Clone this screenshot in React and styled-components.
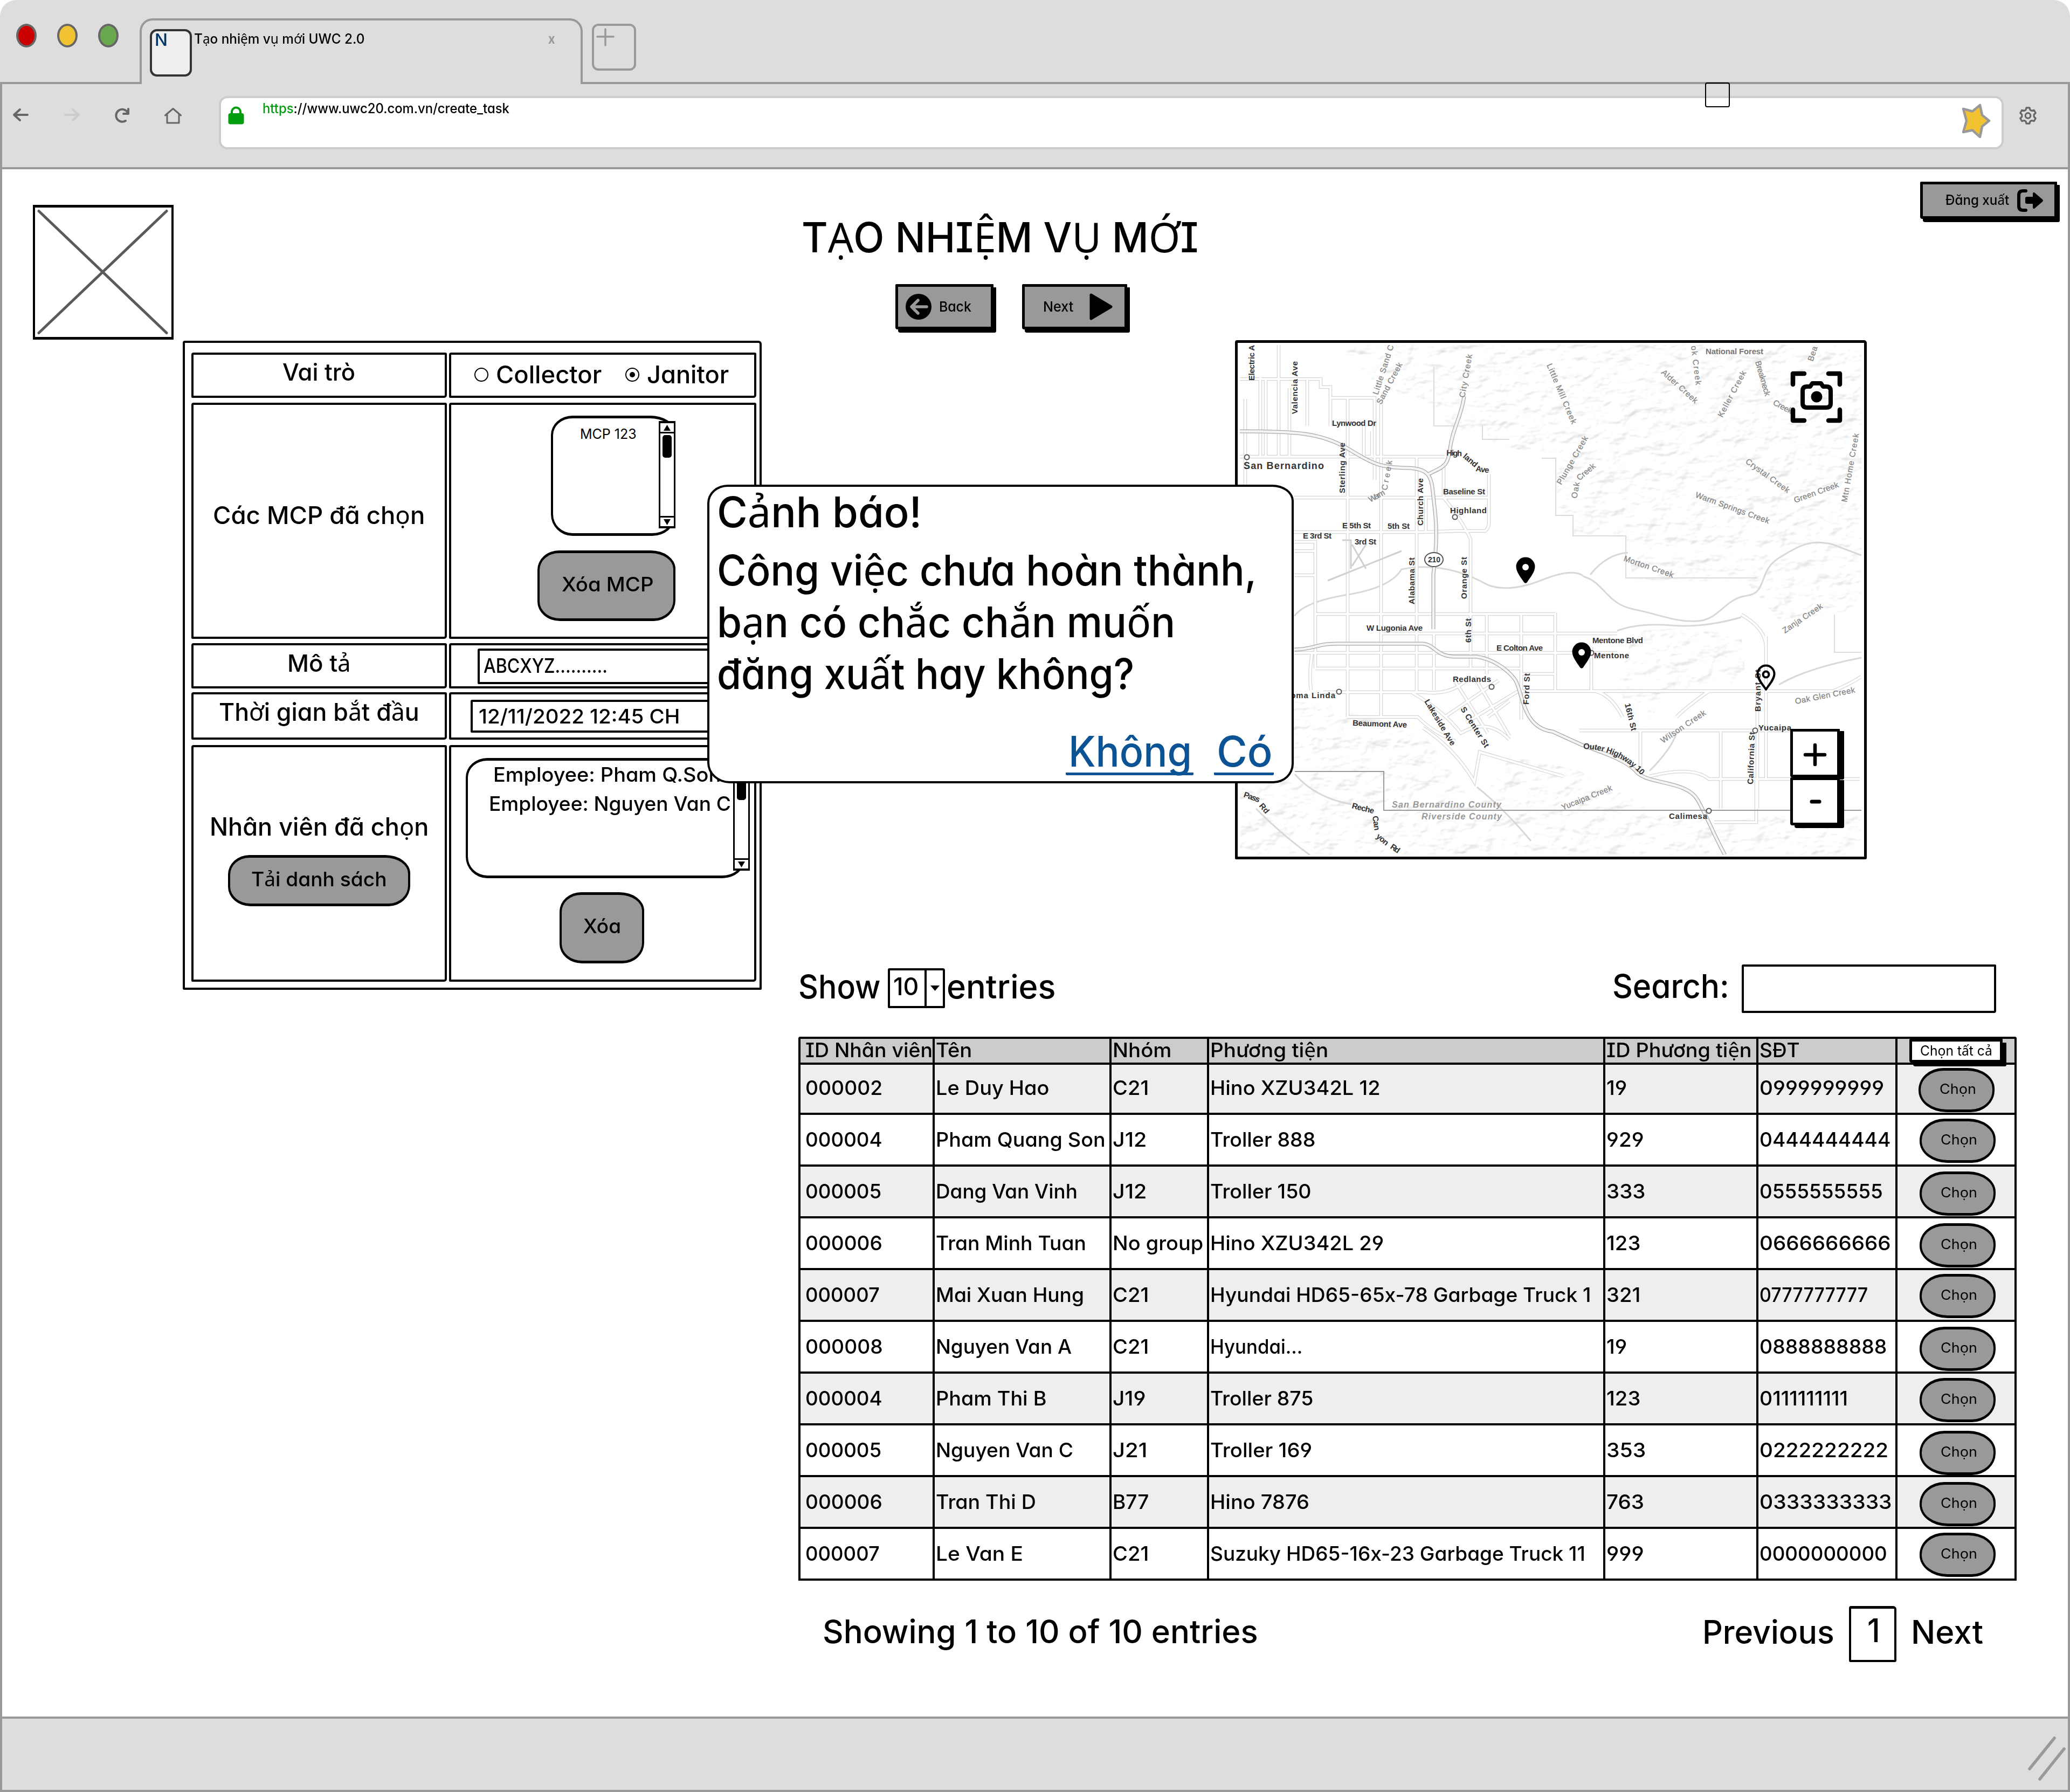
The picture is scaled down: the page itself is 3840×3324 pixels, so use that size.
import React, { useLayoutEffect, useRef, useState } from "react";
import styled, { createGlobalStyle, css } from "styled-components";

const GlobalStyle = createGlobalStyle`
  * { box-sizing: border-box; }
  body { margin: 0; background: #fff; }
`;

/* ---------- text ---------- */

const TextBox = styled.span`
  display: block;
  flex: none;
  width: ${(p) => p.$w}px;
  height: 1em;
  margin-bottom: ${(p) => p.$lift || 0}px;
  line-height: 1;
  font-size: ${(p) => p.$size}px;
  font-weight: ${(p) => p.$weight || 500};
  color: ${(p) => p.$color || "#000"};
  white-space: nowrap;
`;

const TextInner = styled.span`
  display: inline-block;
  margin-left: -0.04em;
  transform-origin: 0 50%;
  white-space: pre;
`;

const Accent = styled.span`
  font-family: "Noto Sans", sans-serif;
  font-weight: 400;
  line-height: 0;
`;

const Green = styled.span`
  color: #009e0f;
`;

// A line of text condensed or widened to a fixed measure.
function Text({ children, w, size, color, weight, lead, lift }) {
  const ref = useRef(null);
  const [scale, setScale] = useState(1);
  useLayoutEffect(() => {
    const natural = ref.current.offsetWidth;
    if (natural) setScale((w + size * 0.08) / natural);
  }, [children, w, size]);
  const parts = children.split(/([\u1EA0-\u1EF9]+)/);
  return (
    <TextBox $w={w} $size={size} $color={color} $weight={weight} $lift={lift}>
      <TextInner ref={ref} style={{ transform: `scaleX(${scale})` }}>
        {lead && <Green>{lead}</Green>}
        {parts.map((p, i) => (i % 2 ? <Accent key={i}>{p}</Accent> : p))}
      </TextInner>
    </TextBox>
  );
}

/* ---------- browser window ---------- */

const Window = styled.div`
  position: relative;
  width: 3840px;
  height: 3324px;
  display: flex;
  flex-direction: column;
  overflow: hidden;
  border-radius: 30px 30px 0 0;
  background: #fff;
  font-family: Inter, "Noto Sans", sans-serif;
  font-feature-settings: "cv11", "cv08", "cv04";
  color: #000;
`;

const TitleBar = styled.div`
  flex: none;
  height: 156px;
  border-bottom: 4px solid #999;
  background: #ddd;
  display: flex;
  align-items: flex-start;
  padding-left: 30px;
`;

const Lights = styled.div`
  display: flex;
  gap: 38px;
  padding-top: 44px;
  width: 229px;
`;

const Light = styled.span`
  width: 38px;
  height: 44px;
  border: 4px solid #666;
  border-radius: 50%;
  background: ${(p) => p.$c};
`;

const Tab = styled.div`
  width: 822px;
  height: 128px;
  margin-top: 34px;
  border: 4px solid #999;
  border-bottom: 0;
  border-radius: 24px 24px 0 0;
  background: #ddd;
  display: flex;
  align-items: flex-start;
  padding: 16px 48px 0 15px;
`;

const Favicon = styled.div`
  width: 78px;
  height: 88px;
  margin-right: 5px;
  border: 4px solid #333;
  border-radius: 13px;
  background: #eee;
  padding: 0 0 0 6px;
`;

const TabTitle = styled.div`
  padding-top: 6px;
  flex: 1;
  display: flex;
  justify-content: space-between;
`;

const NewTab = styled.div`
  width: 82px;
  height: 87px;
  margin: 44px 0 0 17px;
  border: 4px solid #999;
  border-radius: 12px;
  padding: 4px;
`;

const Toolbar = styled.div`
  flex: none;
  height: 158px;
  background: #ddd;
  border: 4px solid #999;
  border-top: 0;
  display: flex;
  align-items: flex-start;
  padding-left: 19px;
`;

const NavIcons = styled.div`
  width: 383px;
  display: flex;
  gap: 62px;
  padding-top: 44px;
`;

const UrlBar = styled.div`
  width: 3311px;
  height: 99px;
  margin-top: 22px;
  border: 4px solid #ccc;
  border-radius: 16px;
  background: #fff;
  display: flex;
  align-items: flex-start;
  padding: 10px 20px 0 13px;
`;

const UrlText = styled.div`
  flex: 1;
  margin-top: -3px;
  padding: 0 0 0 35px;
`;

const SettingsSlot = styled.div`
  padding: 42px 0 0 29px;
`;

const HoverBox = styled.div`
  position: absolute;
  left: 3163px;
  top: 153px;
  width: 46px;
  height: 46px;
  border: 2px solid #000;
  border-radius: 4px;
`;

const Page = styled.main`
  flex: 1;
  border-left: 4px solid #999;
  border-right: 4px solid #999;
  display: flex;
`;

const StatusBar = styled.div`
  flex: none;
  height: 140px;
  background: #ddd;
  border: 4px solid #999;
  display: flex;
  justify-content: flex-end;
  padding: 32px 4px 0 0;
`;

/* ---------- buttons ---------- */

const BlockButton = styled.button`
  width: ${(p) => p.$w}px;
  height: ${(p) => p.$h}px;
  margin: 0;
  padding: ${(p) => p.$pt || 0}px ${(p) => p.$pr || 0}px 0 ${(p) => p.$pl || 0}px;
  border: 5px solid #000;
  border-radius: 2px 1px 3px 4px;
  background: ${(p) => p.$bg || "#999"};
  box-shadow: ${(p) => p.$shadow || "5px 6px 0 #000"};
  font: inherit;
  font-feature-settings: inherit;
  display: flex;
  align-items: center;
  justify-content: space-between;
`;

const PillButton = styled.button`
  width: ${(p) => p.$w}px;
  height: ${(p) => p.$h}px;
  margin: ${(p) => p.$m || 0};
  padding: 0 0 ${(p) => (p.$round ? 3 : 7)}px;
  border: 4px solid #000;
  border-top-width: 5px;
  border-bottom-width: 5px;
  border-radius: ${(p) =>
    p.$round
      ? "46px 50px 44px 52px / 40px 38px 40px 40px"
      : "40px 46px 40px 42px / 36px 34px 38px 36px"};
  background: #999;
  font: inherit;
  font-feature-settings: inherit;
  display: flex;
  align-items: center;
  justify-content: center;
`;

/* ---------- left column ---------- */

const LeftColumn = styled.section`
  width: 1477px;
  padding-top: 66px;
`;

const Placeholder = styled.div`
  width: 261px;
  height: 250px;
  margin-left: 57px;
  border: 5px solid #000;
  border-width: 5px 4px;
`;

const Panel = styled.div`
  width: 1074px;
  height: 1204px;
  margin: 2px 0 0 335px;
  border: 4px solid #000;
  border-radius: 4px 6px 2px 3px;
  padding: 18px 6px 0 12px;
  display: grid;
  grid-template-columns: 474px 570px;
  grid-template-rows: 84px 438px 84px 88px 439px;
  column-gap: 4px;
  row-gap: 8px;
`;

const Cell = styled.div`
  border: 4px solid #000;
  border-radius: 4px 3px 5px 2px;
  margin-top: ${(p) => p.$mt || 0}px;
  margin-bottom: ${(p) => (p.$mt ? -p.$mt : 0)}px;
  padding-top: ${(p) => p.$pt || 0}px;
  padding-bottom: ${(p) => p.$pb || 0}px;
  display: flex;
  flex-direction: ${(p) => (p.$row ? "row" : "column")};
  align-items: ${(p) => p.$align || "center"};
`;

const RadioLabel = styled.label`
  display: flex;
  align-items: center;
  gap: 16px;
  margin-left: ${(p) => p.$ml}px;
`;

const Radio = styled.span`
  width: 26px;
  height: 26px;
  border: 2px solid #000;
  border-radius: 50%;
  display: grid;
  place-items: center;
  &::after {
    content: "";
    width: 10px;
    height: 10px;
    border-radius: 50%;
    background: ${(p) => (p.$on ? "#000" : "transparent")};
  }
`;

const ListBox = styled.div`
  position: relative;
  width: ${(p) => p.$w}px;
  height: 223px;
  margin: ${(p) => p.$m};
  border: 5px solid #000;
  border-width: 5px 4px;
  border-radius: 40px 46px 42px 40px / 36px 30px 36px 40px;
  padding: ${(p) => p.$p};
  display: flex;
  flex-direction: column;
  gap: 17px;
`;

const Track = styled.div`
  position: absolute;
  right: ${(p) => p.$r}px;
  top: 5px;
  width: 31px;
  height: 199px;
  border: 4px solid #000;
  border-width: 4px 3px;
  background: #fff;
  display: flex;
  flex-direction: column;
  align-items: center;
`;

const Stepper = styled.div`
  width: 25px;
  height: 19px;
  display: grid;
  place-items: center;
  border-${(p) => p.$edge}: 3px solid #000;
`;

const Thumb = styled.div`
  flex: 1;
  padding-top: 3px;
  &::before {
    content: "";
    display: block;
    width: 17px;
    height: 42px;
    border-radius: 5px;
    background: #000;
  }
`;

const Field = styled.div`
  width: ${(p) => p.$w}px;
  height: ${(p) => p.$h}px;
  margin: ${(p) => p.$m || 0};
  border: 4px solid #000;
  border-radius: 3px 2px 4px 2px;
  padding: 0 0 ${(p) => p.$pb || 0}px ${(p) => p.$pl || 0}px;
  background: #fff;
  display: flex;
  align-items: center;
`;

/* ---------- right column ---------- */

const RightColumn = styled.section`
  flex: 1;
  display: flex;
  flex-direction: column;
`;

const HeaderRow = styled.header`
  height: 317px;
  display: flex;
  justify-content: space-between;
  align-items: flex-start;
  padding: 23px 20px 0 9px;
`;

const Heading = styled.h1`
  margin: 65px 0 0;
  font: inherit;
`;

const Actions = styled.div`
  display: flex;
  gap: 53px;
  margin: 48px 0 0 171px;
`;

const MapFrame = styled.div`
  position: relative;
  width: 1172px;
  height: 963px;
  margin-left: 810px;
  border: 5px solid #000;
  border-radius: 4px 5px 3px 2px;
`;

const MapDrawing = styled.svg`
  display: block;
  width: 1162px;
  height: 953px;
  font-family: "Liberation Sans", Arial, sans-serif;
`;

const Zoomer = styled.div`
  position: absolute;
  left: 1025px;
  top: 716px;
  display: flex;
  flex-direction: column;
`;

const ListControls = styled.div`
  height: 90px;
  margin: 195px 133px 44px 2px;
  display: flex;
  align-items: center;
`;

const Select = styled.div`
  width: 106px;
  height: 74px;
  margin: 0 5px 2px 16px;
  border: 4px solid #000;
  border-radius: 3px 4px 2px 2px;
  display: flex;
`;

const SelectValue = styled.div`
  width: 68px;
  padding: 0 0 8px 8px;
  border-right: 4px solid #000;
  display: flex;
  align-items: center;
`;

const Caret = styled.div`
  flex: 1;
  display: grid;
  place-items: center;
`;

const Spacer = styled.div`
  flex: 1;
`;

const Table = styled.div`
  width: 2260px;
  border: 4px solid #000;
  border-bottom: 0;
  border-radius: 4px 4px 0 0;
`;

const Row = styled.div`
  display: grid;
  grid-template-columns: 249px 328px 181px 735px 284px 258px 217px;
  height: ${(p) => (p.$head ? 45 : 96)}px;
  background: ${(p) => (p.$head ? "#ccc" : p.$odd ? "#eee" : "#fff")};
`;

const Td = styled.div`
  border-right: 4px solid #000;
  border-bottom: 4px solid #000;
  padding: 0 0 ${(p) => (p.$head ? 4 : 1)}px ${(p) => (p.$first ? 10 : 3)}px;
  display: flex;
  align-items: center;
  min-width: 0;
  &:last-child {
    border-right: 0;
    padding: ${(p) => (p.$head ? "0" : "0 0 0 39px")};
    align-items: ${(p) => (p.$head ? "flex-start" : "center")};
    ${(p) => p.$head && css`padding-left: 22px;`}
  }
`;

const Pager = styled.div`
  height: 104px;
  margin: 47px 160px 0 47px;
  display: flex;
  align-items: center;
`;

const PageNumber = styled.div`
  width: 88px;
  height: 104px;
  margin: 0 29px 0 30px;
  border: 4px solid #000;
  border-top-width: 5px;
  border-radius: 4px 6px 3px 3px;
  padding: 0 0 15px 32px;
  display: flex;
  align-items: center;
`;

/* ---------- dialog ---------- */

const Dialog = styled.div`
  position: absolute;
  left: 1312px;
  top: 899px;
  width: 1088px;
  height: 554px;
  border: 4px solid #000;
  border-radius: 38px 40px 38px 42px / 34px 30px 36px 38px;
  background: #fff;
  padding: 8px 33px 0 17px;
`;

const Message = styled.div`
  margin-top: 30px;
  display: flex;
  flex-direction: column;
  gap: 18px;
`;

const Links = styled.div`
  display: flex;
  justify-content: flex-end;
  gap: 38px;
  margin-top: 66px;
`;

const Link = styled.a`
  border-bottom: 5px solid #0b5394;
  border-radius: 2px;
  padding: 0 6px 0 8px;
`;

/* ---------- icons ---------- */

const Svg = styled.svg`
  display: block;
  flex: none;
  overflow: visible;
  margin: ${(p) => p.$m || 0};
`;

const Arrow = ({ flip, color }) => (
  <Svg width="32" height="26" viewBox="0 0 32 26" fill="none" stroke={color} strokeWidth="4" strokeLinecap="round" strokeLinejoin="round">
    <path d={flip ? "M4 13H29M18 3L29 13L18 23" : "M28 13H3M14 3L3 13L14 23"} />
  </Svg>
);

const Reload = () => (
  <Svg width="32" height="30" viewBox="0 0 32 30" fill="none" stroke="#666" strokeWidth="4" strokeLinecap="round" strokeLinejoin="round">
    <path d="M22 24A11.5 11.5 0 1 1 26 9" />
    <path d="M27 2V11H18" />
  </Svg>
);

const Home = () => (
  <Svg width="32" height="30" viewBox="0 0 32 30" fill="none" stroke="#666" strokeWidth="3" strokeLinecap="round" strokeLinejoin="round">
    <path d="M1.5 14L16 1.5L30.5 14M5 12V28H27V12" />
  </Svg>
);

const Lock = () => (
  <Svg $m="6px 0 0" width="30" height="33" viewBox="0 0 30 33">
    <path d="M7 14V9.500A8 8 0 0 1 23 9.500V14" fill="none" stroke="#009e0f" strokeWidth="4" />
    <rect x="0.500" y="12" width="29" height="20.500" rx="4" fill="#009e0f" />
  </Svg>
);

const Star = () => (
  <Svg width="54" height="66" viewBox="3639 192 54 66">
    <path
      d="M3690 224L3677 234.500L3673 254L3659 241.500L3642 245L3648 224L3642 202L3659 206.500L3673 195L3677 213.500Z"
      fill="#f1c232"
      stroke="#999"
      strokeWidth="4.500"
      strokeLinejoin="round"
    />
  </Svg>
);

const Gear = () => (
  <Svg width="32" height="33" viewBox="0 0 32 33" fill="none" stroke="#666" strokeWidth="3.200" strokeLinejoin="round">
    <path d="M13 1.800h6l1 4 3 1.700 4.200-1.200 3 5.200-3 3v4l3 3-3 5.200-4.200-1.200-3 1.700-1 4h-6l-1-4-3-1.700-4.200 1.200-3-5.200 3-3v-4l-3-3 3-5.200L9 7.500l3-1.700z" />
    <circle cx="16" cy="16.500" r="4.800" />
  </Svg>
);

const LogoutIcon = () => (
  <Svg width="49" height="42" viewBox="0 0 49 42">
    <path d="M16 3H11Q3 3 3 11V31Q3 39 11 39H16" fill="none" stroke="#000" strokeWidth="6" strokeLinecap="round" />
    <path d="M18 14H29V8Q30 4 33 7L47 19Q49 21 47 23L33 35Q30 38 29 34V27H18Q15 27 15 24V17Q15 14 18 14Z" />
  </Svg>
);

const BackIcon = () => (
  <Svg width="48" height="48" viewBox="0 0 48 48">
    <circle cx="24" cy="24" r="24" />
    <path d="M39 24H12M23 12L11 24L23 36" fill="none" stroke="#999" strokeWidth="5.500" strokeLinecap="round" strokeLinejoin="round" />
  </Svg>
);

const PlayIcon = () => (
  <Svg width="43" height="50" viewBox="0 0 43 50">
    <path d="M3 3L40 25L3 47Z" stroke="#000" strokeWidth="5" strokeLinejoin="round" />
  </Svg>
);

const Triangle = ({ up, w = 13, h = 11 }) => (
  <Svg width={w} height={h} viewBox="0 0 10 10" preserveAspectRatio="none">
    <path d={up ? "M0 10L5 0L10 10Z" : "M0 0H10L5 10Z"} />
  </Svg>
);

function Scrollbar({ r }) {
  return (
    <Track $r={r}>
      <Stepper $edge="bottom"><Triangle up /></Stepper>
      <Thumb />
      <Stepper $edge="top"><Triangle /></Stepper>
    </Track>
  );
}

/* ---------- map ---------- */

// text, x, y, length, rotation
const STREETS = [
  ["Electric A", 2327, 706, 66, -90], ["Valencia Ave", 2407, 768, 98, -90], ["Lynwood Dr", 2471, 790, 82, 0],
  ["Sterling Ave", 2495, 915, 94, -90], ["High", 2683, 845, 29, 2], ["land", 2713, 848, 30, 40], ["Ave", 2737, 874, 25, 8],
  ["Baseline St", 2677, 917, 78, 0], ["Highland", 2690, 952, 68, 0], ["E 5th St", 2490, 980, 53, 0],
  ["5th St", 2574, 981, 41, 0], ["E 3rd St", 2417, 999, 53, 0], ["3rd St", 2513, 1010, 40, 0],
  ["Church Ave", 2640, 975, 88, -90], ["Alabama St", 2624, 1121, 87, -90], ["Orange St", 2721, 1111, 78, -90],
  ["6th St", 2729, 1192, 45, -90], ["W Lugonia Ave", 2535, 1170, 104, 0], ["E Colton Ave", 2776, 1207, 86, 0],
  ["Redlands", 2695, 1265, 71, 0], ["Loma Linda", 2384, 1295, 93, 0], ["Beaumont Ave", 2509, 1346, 101, 2],
  ["Lakeside Ave", 2642, 1301, 97, 59], ["S Center St", 2709, 1315, 86, 58], ["Ford St", 2836, 1307, 58, -88],
  ["Pass", 2306, 1478, 31, 20], ["Rd", 2335, 1495, 20, 50], ["Reche", 2507, 1499, 42, 14], ["Can", 2546, 1514, 27, 82],
  ["yon", 2552, 1553, 25, 40], ["Rd", 2578, 1573, 18, 35], ["Mentone Blvd", 2954, 1193, 94, 0],
  ["Mentone", 2957, 1221, 65, 0], ["Bryant St", 3266, 1320, 78, -90], ["Yucaipa", 3262, 1355, 61, 0],
  ["California St", 3252, 1455, 97, -88], ["16th St", 3014, 1306, 52, 76], ["Calimesa", 3096, 1519, 71, 0],
];

const CREEKS = [
  ["Little Sand C", 2556, 733, 96, -72], ["Sand Creek", 2562, 751, 85, -62], ["City Creek", 2717, 738, 81, -80],
  ["Warm", 2542, 932, 32, -28], ["Creek", 2573, 910, 56, -80], ["Little Mill Creek", 2869, 677, 120, 67],
  ["Plunge Creek", 2896, 900, 101, -60], ["Oak", 2925, 925, 30, -80], ["Creek", 2930, 892, 40, -40],
  ["Alder Creek", 3081, 692, 85, 42], ["ok Creek", 3137, 642, 73, 83], ["Keller Creek", 3195, 775, 95, -62],
  ["Breakneck", 3256, 671, 67, 74], ["Creek", 3288, 750, 38, 28], ["Bea", 3363, 671, 28, -72],
  ["Crystal Creek", 3237, 858, 97, 36], ["Green Creek", 3330, 933, 87, -20], ["Mtn Home Creek", 3426, 932, 129, -80],
  ["Warm Springs Creek", 3144, 922, 145, 20], ["Morton Creek", 3011, 1040, 97, 19], ["Zanja Creek", 3311, 1175, 86, -34],
  ["Wilson Creek", 3085, 1379, 97, -34], ["Oak Glen Creek", 3331, 1306, 113, -11], ["Yucaipa Creek", 2899, 1503, 100, -22],
];

const HIGHWAYS =
  "M2300 800C2400 800 2450 802 2500 832S2560 867 2610 868S2655 890 2661 939S2664 1020 2659 1066V1167" +
  "M2649 880C2675 866 2686 868 2690 832S2712 770 2716 735" +
  "M2401 1205C2440 1204 2440 1194 2480 1194H2640C2662 1196 2664 1218 2700 1218H2739C2768 1222 2795 1240 2810 1260S2822 1350 2880 1357" +
  "L2935 1382C2985 1400 3020 1412 3038 1434C3064 1456 3130 1448 3150 1485S3180 1550 3200 1586";

const MINOR_ROADS =
  "M2300 703H2450V718H2468V790M2310 740V900M2338 700V845M2348 703V845M2372 640V845M2392 720V845M2425 703V790M2468 738H2550V890" +
  "M2300 847H2680M2400 923H2760M2400 987H2640L2700 985H2755Q2762 980 2762 970V880M2401 1005H2440V1240M2401 1022H2438M2401 1067H2440" +
  "M2500 740V1330M2562 740V1330M2530 790V845M2545 800V845M2628 845V1285M2645 923V985M2678 860V923Q2712 965 2728 1000V1240" +
  "M2442 1139H2885M2560 1175H3000M2401 1211H3000M2440 1240H2820M2434 1213Q2428 1250 2432 1280M2455 1284H2640Q2690 1290 2720 1262" +
  "M2758 1137V1250M2822 1137V1335M2885 1137V1280M2952 1200V1282M2820 1250H2885M2820 1282H2960Q2990 1290 3010 1330" +
  "M2660 1175V1280M2700 1265L2760 1360M2735 1255L2800 1365M2680 1330L2780 1262M2720 1340L2820 1280M2760 1330L2800 1300" +
  "M2620 1285Q2680 1320 2710 1360Q2760 1330 2800 1372M2500 1330H2630Q2660 1360 2700 1375M2640 1350Q2700 1390 2735 1450L2745 1395L2900 1440" +
  "M2930 1355H3330M3043 1355V1430M3192 1355V1500M3260 1270V1500M3276 1180V1445M3060 1440Q3140 1420 3170 1445H3450M3180 1525H3258V1445" +
  "M2940 1282H3270M3170 1282Q3130 1310 3110 1330M3276 1282H3400Q3430 1270 3453 1255M3230 1140Q3275 1165 3276 1200";

const BOUNDARIES =
  "M2860 850H2886V956H2918V994H3016V1072H3260M3403 1140V1210H3453M2660 680V790H2700M2750 790V815H2800";

const RIVERS =
  "M2401 1143Q2420 1116 2500 1103T2600 1056Q2680 1040 2760 1085Q2800 1100 2860 1076T2939 1070C2975 1080 2980 1120 3030 1130S3110 1155 3150 1152" +
  "S3200 1110 3240 1105S3260 1060 3300 1035S3360 1000 3400 1010T3453 1030M2950 1066Q2980 1028 3020 1025M3000 1170Q3040 1155 3100 1160T3230 1145" +
  "M2402 1436Q2440 1480 2507 1492M2330 1500Q2380 1550 2430 1586M3453 1220Q3350 1240 3300 1270M3060 1430Q3100 1390 3110 1360M2740 1460Q2790 1500 2840 1560";

const RIDGES = [
  "M2480 639H3453V1130L3300 1150L3240 1080L3030 1075L3016 994H2918V956H2886V850L2800 830L2700 800L2640 740L2560 720Z",
  "M3030 1170L3130 1165L3230 1180L3240 1265L3100 1280L3050 1350L3000 1280Z",
  "M2300 1290L2480 1310L2640 1360L2740 1500L2800 1400L2930 1430L3100 1520L3453 1510V1586H2300Z",
];

const Label = ({ item, size = 15, ...rest }) => {
  const [t, x, y, len, rot] = item;
  return (
    <text x={x} y={y} fontSize={size} textLength={len} transform={`rotate(${rot} ${x} ${y})`} {...rest}>
      {t}
    </text>
  );
};

const Pin = ({ x, y, hollow }) => (
  <g transform={`translate(${x} ${y})`}>
    <path
      d={hollow
        ? "M0 46C-5 38 -15.500 27 -15.500 17A15.500 15.500 0 0 1 15.500 17C15.500 27 5 38 0 46Z"
        : "M-3 46C-8 38 -17.500 27 -17.500 17A17.500 17.500 0 0 1 17.500 17C17.500 27 8 38 3 46Q0 49.500 -3 46Z"}
      fill={hollow ? "none" : "#000"}
      stroke="#000"
      strokeWidth={hollow ? 4 : 0}
      strokeLinejoin="round"
    />
    <circle cx="0" cy="18" r={hollow ? 5.500 : 6} fill={hollow ? "none" : "#fff"} stroke="#000" strokeWidth={hollow ? 4 : 0} />
  </g>
);

function MapView() {
  return (
    <MapFrame>
      <MapDrawing viewBox="2296 636 1162 953">
        <defs>
          <filter id="relief" x="0" y="0" width="100%" height="100%" colorInterpolationFilters="sRGB">
            <feTurbulence type="fractalNoise" baseFrequency="0.026 0.042" numOctaves="3" seed="8" />
            <feDiffuseLighting surfaceScale="6" diffuseConstant="1.22" lightingColor="#fff">
              <feDistantLight azimuth="225" elevation="58" />
            </feDiffuseLighting>
            <feColorMatrix values="0.24 0 0 0 0.765  0.24 0 0 0 0.765  0.24 0 0 0 0.765  0 0 0 1 0" />
            <feComposite in2="SourceGraphic" operator="in" />
          </filter>
          <clipPath id="sheet"><rect x="2300" y="639" width="1153" height="947" /></clipPath>
          <path id="outer" d="M2937 1389Q3004 1390 3050 1444" />
        </defs>
        <g clipPath="url(#sheet)">
          <g filter="url(#relief)">
            {RIDGES.map((d) => <path key={d} d={d} />)}
          </g>
          <path d={BOUNDARIES} fill="none" stroke="#dcdcdc" strokeWidth="2" />
          <path d={RIVERS} fill="none" stroke="#d8d8d8" strokeWidth="3" />
          <path d={MINOR_ROADS} fill="none" stroke="#d6d6d6" strokeWidth="6.500" />
          <path d={MINOR_ROADS} fill="none" stroke="#fff" strokeWidth="4" />
          <path d="M2463 1077L2600 1022M2490 1002H2506V1055M2508 1010L2534 1055M2534 1010L2508 1050" fill="none" stroke="#d0d0d0" strokeWidth="3" />
          <path d={HIGHWAYS} fill="none" stroke="#a8a8a8" strokeWidth="7" />
          <path d={HIGHWAYS} fill="none" stroke="#f4f4f4" strokeWidth="4.500" />
          <path d="M2402 1431H2567V1503H3453" fill="none" stroke="#999" strokeWidth="2" />
          <g fill="#333" fontWeight="700">
            {STREETS.map((s) => <Label key={s.join()} item={s} />)}
            <Label item={["San Bernardino", 2307, 870, 149, 0]} size={18} />
            <text fontSize="15"><textPath href="#outer" textLength="122">Outer Highway 10</textPath></text>
          </g>
          <g fill="#858585" stroke="#858585" strokeWidth="0.300">
            {CREEKS.map((s) => <Label key={s.join()} item={s} />)}
          </g>
          <g fill="#999" fontWeight="700" fontStyle="italic">
            <Label item={["San Bernardino County", 2582, 1498, 203, 0]} size={16} />
            <Label item={["Riverside County", 2637, 1520, 149, 0]} size={16} />
          </g>
          <Label item={["National Forest", 3164, 657, 107, 0]} fill="#777" fontWeight="700" />
          <g fill="#fff" stroke="#555" strokeWidth="2">
            {[[2313, 848], [2699, 959], [2767, 1274], [2484, 1283], [2952, 1211], [3256, 1355], [3170, 1504]].map(([x, y]) => (
              <circle key={x} cx={x} cy={y} r="4.500" />
            ))}
            <ellipse cx="2660" cy="1038" rx="17" ry="13" />
          </g>
          <text x="2649" y="1043" fontSize="14" fontWeight="700" fill="#333" textLength="23">210</text>
        </g>
        <Pin x={2830} y={1034} />
        <Pin x={2934} y={1192} />
        <Pin x={3276} y={1233} hollow />
        <g fill="none" stroke="#000" strokeWidth="8.500" strokeLinecap="round" strokeLinejoin="round">
          <path d="M3326 713V693H3347M3392 693H3413V713M3413 760V780H3392M3347 780H3326V760" />
          <path strokeWidth="8" d="M3352 717H3358L3362 711H3378L3382 717H3388Q3396 717 3396 725V748Q3396 756 3388 756H3352Q3344 756 3344 748V725Q3344 717 3352 717Z" />
        </g>
        <circle cx="3370" cy="736" r="10.500" />
      </MapDrawing>
      <Zoomer>
        <BlockButton $w={92} $h={90} $pl={20} $pt={5} $bg="#fff" $shadow="8px 4px 0 #000">
          <Svg width="42" height="42" viewBox="0 0 42 42" stroke="#000" strokeWidth="6.500" strokeLinecap="round">
            <path d="M3 21H39M21 3V39" />
          </Svg>
        </BlockButton>
        <BlockButton $w={92} $h={89} $pl={31} $bg="#fff" $shadow="8px 5px 0 #000">
          <Svg width="22" height="8" viewBox="0 0 22 8" stroke="#000" strokeWidth="7" strokeLinecap="round">
            <path d="M4 4H18" />
          </Svg>
        </BlockButton>
      </Zoomer>
    </MapFrame>
  );
}

/* ---------- data ---------- */

const HEAD = [["ID Nhân viên", 233], ["Tên", 64], ["Nhóm", 106], ["Phương tiện", 216], ["ID Phương tiện", 267], ["SĐT", 72]];

const ROWS = [
  [2, ["000002", 140], ["Le Duy Hao", 207], ["C21", 64], ["Hino XZU342L 12", 313], ["19", 35], ["0999999999", 228]],
  [-2, ["000004", 140], ["Pham Quang Son", 312], ["J12", 60], ["Troller 888", 192], ["929", 67], ["0444444444", 240]],
  [3, ["000005", 138], ["Dang Van Vinh", 260], ["J12", 60], ["Troller 150", 185], ["333", 70], ["0555555555", 226]],
  [3, ["000006", 140], ["Tran Minh Tuan", 276], ["No group", 165], ["Hino XZU342L 29", 319], ["123", 60], ["0666666666", 241]],
  [-2, ["000007", 135], ["Mai Xuan Hung", 272], ["C21", 64], ["Hyundai HD65-65x-78 Garbage Truck 1", 704], ["321", 60], ["0777777777", 198]],
  [2, ["000008", 141], ["Nguyen Van A", 249], ["C21", 64], ["Hyundai...", 168], ["19", 35], ["0888888888", 233]],
  [0, ["000004", 140], ["Pham Thi B", 203], ["J19", 59], ["Troller 875", 189], ["123", 60], ["0111111111", 161]],
  [4, ["000005", 138], ["Nguyen Van C", 252], ["J21", 61], ["Troller 169", 186], ["353", 70], ["0222222222", 236]],
  [2, ["000006", 140], ["Tran Thi D", 183], ["B77", 64], ["Hino 7876", 181], ["763", 67], ["0333333333", 243]],
  [-1, ["000007", 135], ["Le Van E", 159], ["C21", 64], ["Suzuky HD65-16x-23 Garbage Truck 11", 693], ["999", 67], ["0000000000", 234]],
];

function DataTable() {
  return (
    <Table>
      <Row $head>
        {HEAD.map(([t, w], i) => (
          <Td key={t} $head $first={i === 0}><Text w={w} size={37}>{t}</Text></Td>
        ))}
        <Td $head>
          <BlockButton $w={173} $h={44} $pl={16} $bg="#fff" $shadow="7px 7px 0 #000">
            <Text w={132} size={25} weight={400}>Chọn tất cả</Text>
          </BlockButton>
        </Td>
      </Row>
      {ROWS.map(([shift, ...cells], r) => (
        <Row key={r} $odd={r % 2 === 0}>
          {cells.map(([t, w], i) => (
            <Td key={i} $first={i === 0}><Text w={w} size={37}>{t}</Text></Td>
          ))}
          <Td>
            <PillButton $round $w={141} $h={82} $m={`${shift + 5}px 0 0 ${r ? 2 : 0}px`}>
              <Text w={66} size={25} weight={400}>Chọn</Text>
            </PillButton>
          </Td>
        </Row>
      ))}
    </Table>
  );
}

/* ---------- page ---------- */

const Employee = styled.div`
  padding-left: 8px;
`;

function TaskPanel() {
  return (
    <Panel>
      <Cell $pt={10}><Text w={132} size={44}>Vai trò</Text></Cell>
      <Cell $row $pb={3}>
        <RadioLabel $ml={43}><Radio /><Text w={193} size={45}>Collector</Text></RadioLabel>
        <RadioLabel $ml={45}><Radio $on /><Text w={149} size={45}>Janitor</Text></RadioLabel>
      </Cell>

      <Cell $pt={182} $mt={1}><Text w={390} size={45}>Các MCP đã chọn</Text></Cell>
      <Cell $mt={1} $align="flex-start">
        <ListBox $w={230} $m="20px 0 0 185px" $p="17px 0 0 51px">
          <Text w={103} size={25} weight={400}>MCP 123</Text>
          <Scrollbar r={-5} />
        </ListBox>
        <PillButton $w={256} $h={131} $m="27px 0 0 160px"><Text w={168} size={37}>Xóa MCP</Text></PillButton>
      </Cell>

      <Cell $pt={11} $mt={1}><Text w={114} size={44}>Mô tả</Text></Cell>
      <Cell $mt={1} $align="flex-start">
        <Field $w={480} $h={66} $m="6px 0 0 49px" $pl={8} $pb={4}><Text w={227} size={37}>ABCXYZ..........</Text></Field>
      </Cell>

      <Cell $pt={10}><Text w={368} size={45}>Thời gian bắt đầu</Text></Cell>
      <Cell $align="flex-start">
        <Field $w={480} $h={61} $m="10px 0 0 36px" $pl={12}><Text w={370} size={37}>12/11/2022 12:45 CH</Text></Field>
      </Cell>

      <Cell $pt={124} $mt={2}>
        <Text w={403} size={46}>Nhân viên đã chọn</Text>
        <PillButton $w={338} $h={95} $m="30px 0 0"><Text w={249} size={37}>Tải danh sách</Text></PillButton>
      </Cell>
      <Cell $mt={2} $align="flex-start">
        <ListBox $w={518} $m="20px 0 0 27px" $p="7px 0 0 40px">
          <Employee><Text w={419} size={37}>Employee: Pham Q.Son</Text></Employee>
          <Text w={446} size={37}>Employee: Nguyen Van C</Text>
          <Scrollbar r={-13} />
        </ListBox>
        <PillButton $w={157} $h={132} $m="26px 0 0 201px"><Text w={67} size={37}>Xóa</Text></PillButton>
      </Cell>
    </Panel>
  );
}

export default function App() {
  return (
    <Window>
      <GlobalStyle />
      <TitleBar>
        <Lights>
          <Light $c="#cc0000" /><Light $c="#f1c232" /><Light $c="#6aa84f" />
        </Lights>
        <Tab>
          <Favicon><Text w={21} size={31} color="#003366">N</Text></Favicon>
          <TabTitle>
            <Text w={314} size={25}>Tạo nhiệm vụ mới UWC 2.0</Text>
            <Text w={11} size={25} color="#999" weight={700}>x</Text>
          </TabTitle>
        </Tab>
        <NewTab>
          <Svg width="34" height="34" viewBox="0 0 34 34" stroke="#999" strokeWidth="3.500" strokeLinecap="round">
            <path d="M2 16H32M17 2V32" />
          </Svg>
        </NewTab>
      </TitleBar>

      <Toolbar>
        <NavIcons>
          <Arrow color="#666" />
          <Arrow flip color="#ccc" />
          <Reload />
          <Home />
        </NavIcons>
        <UrlBar>
          <Lock />
          <UrlText><Text w={456} size={25} lead="https">://www.uwc20.com.vn/create_task</Text></UrlText>
          <Star />
        </UrlBar>
        <SettingsSlot><Gear /></SettingsSlot>
      </Toolbar>

      <Page>
        <LeftColumn>
          <Placeholder>
            <Svg width="253" height="240" viewBox="0 0 254 240" stroke="#5a5a5a" strokeWidth="5" strokeLinecap="round">
              <path d="M7 6L245 233M245 6L7 233" />
            </Svg>
          </Placeholder>
          <TaskPanel />
        </LeftColumn>

        <RightColumn>
          <HeaderRow>
            <div>
              <Heading><Text w={730} size={77}>TẠO NHIỆM VỤ MỚI</Text></Heading>
              <Actions>
                <BlockButton $w={182} $h={84} $pl={14} $pr={37}>
                  <BackIcon /><Text w={58} size={26}>Back</Text>
                </BlockButton>
                <BlockButton $w={195} $h={84} $pl={35} $pr={22}>
                  <Text w={54} size={26}>Next</Text><PlayIcon />
                </BlockButton>
              </Actions>
            </div>
            <BlockButton $w={254} $h={69} $pl={43} $pr={20}>
              <Text w={116} size={25}>Đăng xuất</Text><LogoutIcon />
            </BlockButton>
          </HeaderRow>

          <MapView />

          <ListControls>
            <Text w={148} size={61} lift={8}>Show</Text>
            <Select>
              <SelectValue><Text w={44} size={45}>10</Text></SelectValue>
              <Caret><Triangle w={17} h={10} /></Caret>
            </Select>
            <Text w={198} size={61} lift={8}>entries</Text>
            <Spacer />
            <Text w={212} size={61} lift={10}>Search:</Text>
            <Field $w={472} $h={90} $m="0 0 0 26px" />
          </ListControls>

          <DataTable />

          <Pager>
            <Text w={803} size={60} lift={11}>Showing 1 to 10 of 10 entries</Text>
            <Spacer />
            <Text w={240} size={60} lift={8}>Previous</Text>
            <PageNumber><Text w={19} size={60}>1</Text></PageNumber>
            <Text w={129} size={60} lift={8}>Next</Text>
          </Pager>
        </RightColumn>
      </Page>

      <StatusBar>
        <Svg width="70" height="84" viewBox="3761 3220 70 84" stroke="#999" strokeWidth="5.500" strokeLinecap="round">
          <path d="M3810 3224L3764 3281M3828 3244L3783 3300" />
        </Svg>
      </StatusBar>

      <HoverBox />

      <Dialog>
        <Text w={374} size={78}>Cảnh báo!</Text>
        <Message>
          <Text w={995} size={78}>Công việc chưa hoàn thành,</Text>
          <Text w={844} size={78}>bạn có chắc chắn muốn</Text>
          <Text w={768} size={78}>đăng xuất hay không?</Text>
        </Message>
        <Links>
          <Link><Text w={223} size={78} color="#0b5394">Không</Text></Link>
          <Link><Text w={97} size={78} color="#0b5394">Có</Text></Link>
        </Links>
      </Dialog>
    </Window>
  );
}
